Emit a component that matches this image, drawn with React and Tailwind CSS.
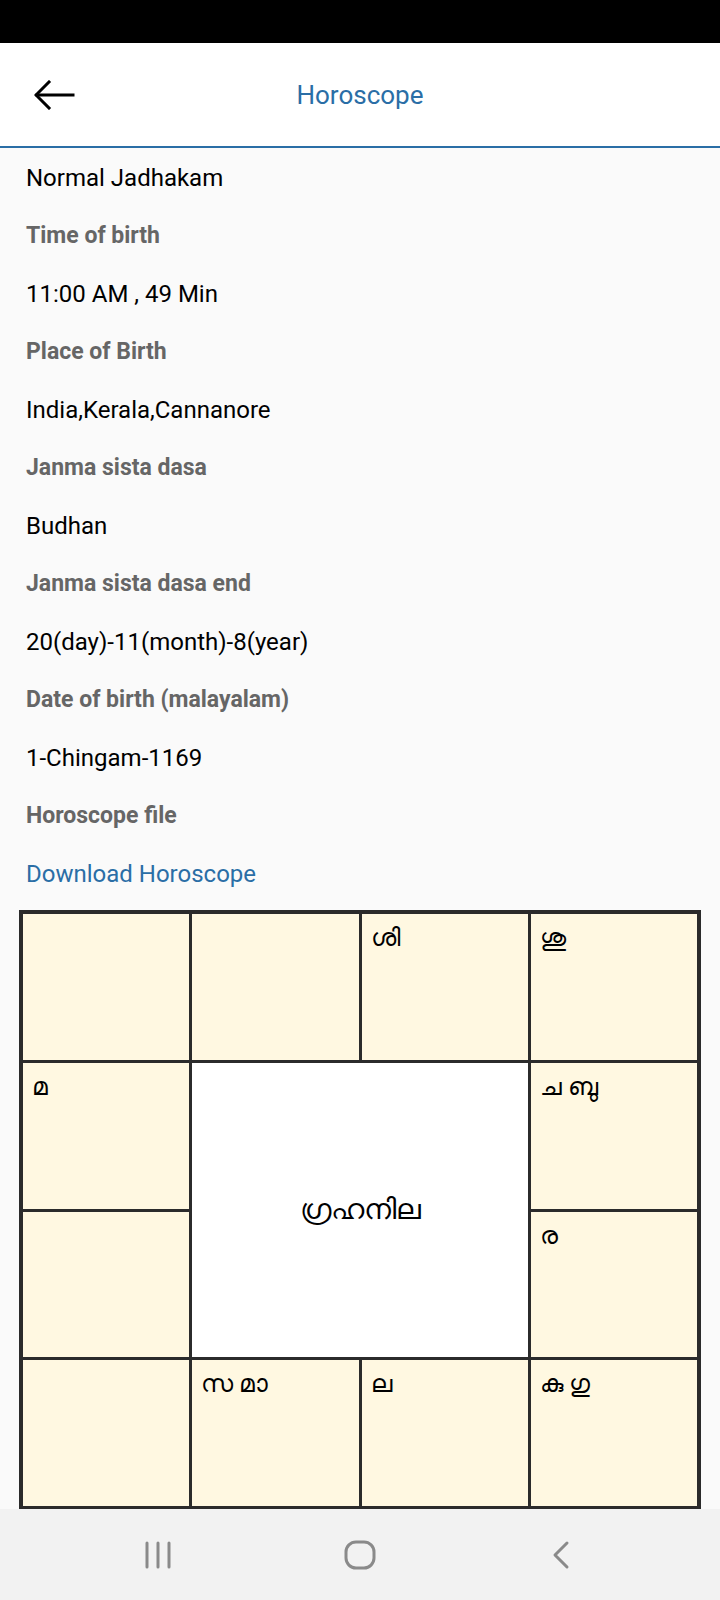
import React from 'react';

const details = [
  { label: 'Time of birth', value: '11:00 AM , 49 Min' },
  { label: 'Place of Birth', value: 'India,Kerala,Cannanore' },
  { label: 'Janma sista dasa', value: 'Budhan' },
  { label: 'Janma sista dasa end', value: '20(day)-11(month)-8(year)' },
  { label: 'Date of birth (malayalam)', value: '1-Chingam-1169' },
];

function BackArrow() {
  return (
    <svg width="42" height="30" viewBox="0 0 42 30" fill="none" stroke="#000" strokeWidth="3" strokeLinecap="square">
      <path d="M3 15H39" />
      <path d="M15 2L2 15L15 28" />
    </svg>
  );
}

function Cell({ text }) {
  return (
    <div className="bg-[#fff8e1] px-[9px] pt-[8px] text-[25px] leading-[32px] text-black">
      {text}
    </div>
  );
}

function Chart() {
  return (
    <div className="mx-[19px] mt-[7px] grid h-[600px] grid-cols-4 grid-rows-4 gap-[3px] bg-[#2b2b2b] p-[4px]">
      <Cell text="" />
      <Cell text="" />
      <Cell text="ശി" />
      <Cell text="ശു" />
      <Cell text="മ" />
      <div className="col-span-2 row-span-2 flex items-center justify-center bg-white text-[29px] text-black">
        ഗ്രഹനില
      </div>
      <Cell text="ച ബു" />
      <Cell text="" />
      <Cell text="ര" />
      <Cell text="" />
      <Cell text="സ മാ" />
      <Cell text="ല" />
      <Cell text="കു ഗു" />
    </div>
  );
}

export default function App() {
  return (
    <div className="relative h-[1600px] w-[720px] overflow-hidden bg-[#fafafa] font-['Roboto','Noto_Sans',sans-serif]">
      <div className="h-[43px] bg-black" />
      <header className="relative flex h-[105px] items-center justify-center border-b-2 border-[#2a6ea6] bg-white pt-[2px]">
        <button className="absolute left-[34px] top-[37px]">
          <BackArrow />
        </button>
        <h1 className="text-[26px] text-[#2a6ea6]">Horoscope</h1>
      </header>

      <div className="px-[26px] pt-[1px]">
        <div className="flex h-[58px] items-center text-[24px] text-black">Normal Jadhakam</div>
        {details.map((d) => (
          <React.Fragment key={d.label}>
            <div className="flex h-[58px] items-center text-[23px] font-bold text-[#666]">{d.label}</div>
            <div className="flex h-[58px] items-center text-[24px] text-black">{d.value}</div>
          </React.Fragment>
        ))}
        <div className="flex h-[58px] items-center text-[23px] font-bold text-[#666]">Horoscope file</div>
        <div className="flex h-[58px] items-center text-[24px] text-[#2a6ea6]">Download Horoscope</div>
      </div>

      <Chart />

      <nav className="absolute bottom-0 left-0 grid h-[91px] w-full grid-cols-3 items-center bg-[#f2f2f2] px-[59px]">
        <div className="flex justify-center">
          <svg width="28" height="28" viewBox="0 0 28 28" stroke="#8a8a8a" strokeWidth="3" strokeLinecap="round">
            <path d="M2 2V26M13 2V26M24 2V26" />
          </svg>
        </div>
        <div className="flex justify-center">
          <svg width="32" height="30" viewBox="0 0 32 30" fill="none" stroke="#8a8a8a" strokeWidth="3">
            <rect x="2" y="2" width="28" height="26" rx="10" />
          </svg>
        </div>
        <div className="flex justify-center">
          <svg width="20" height="30" viewBox="0 0 20 30" fill="none" stroke="#8a8a8a" strokeWidth="3" strokeLinecap="round" strokeLinejoin="round">
            <path d="M16 3L4 15L16 27" />
          </svg>
        </div>
      </nav>
    </div>
  );
}
